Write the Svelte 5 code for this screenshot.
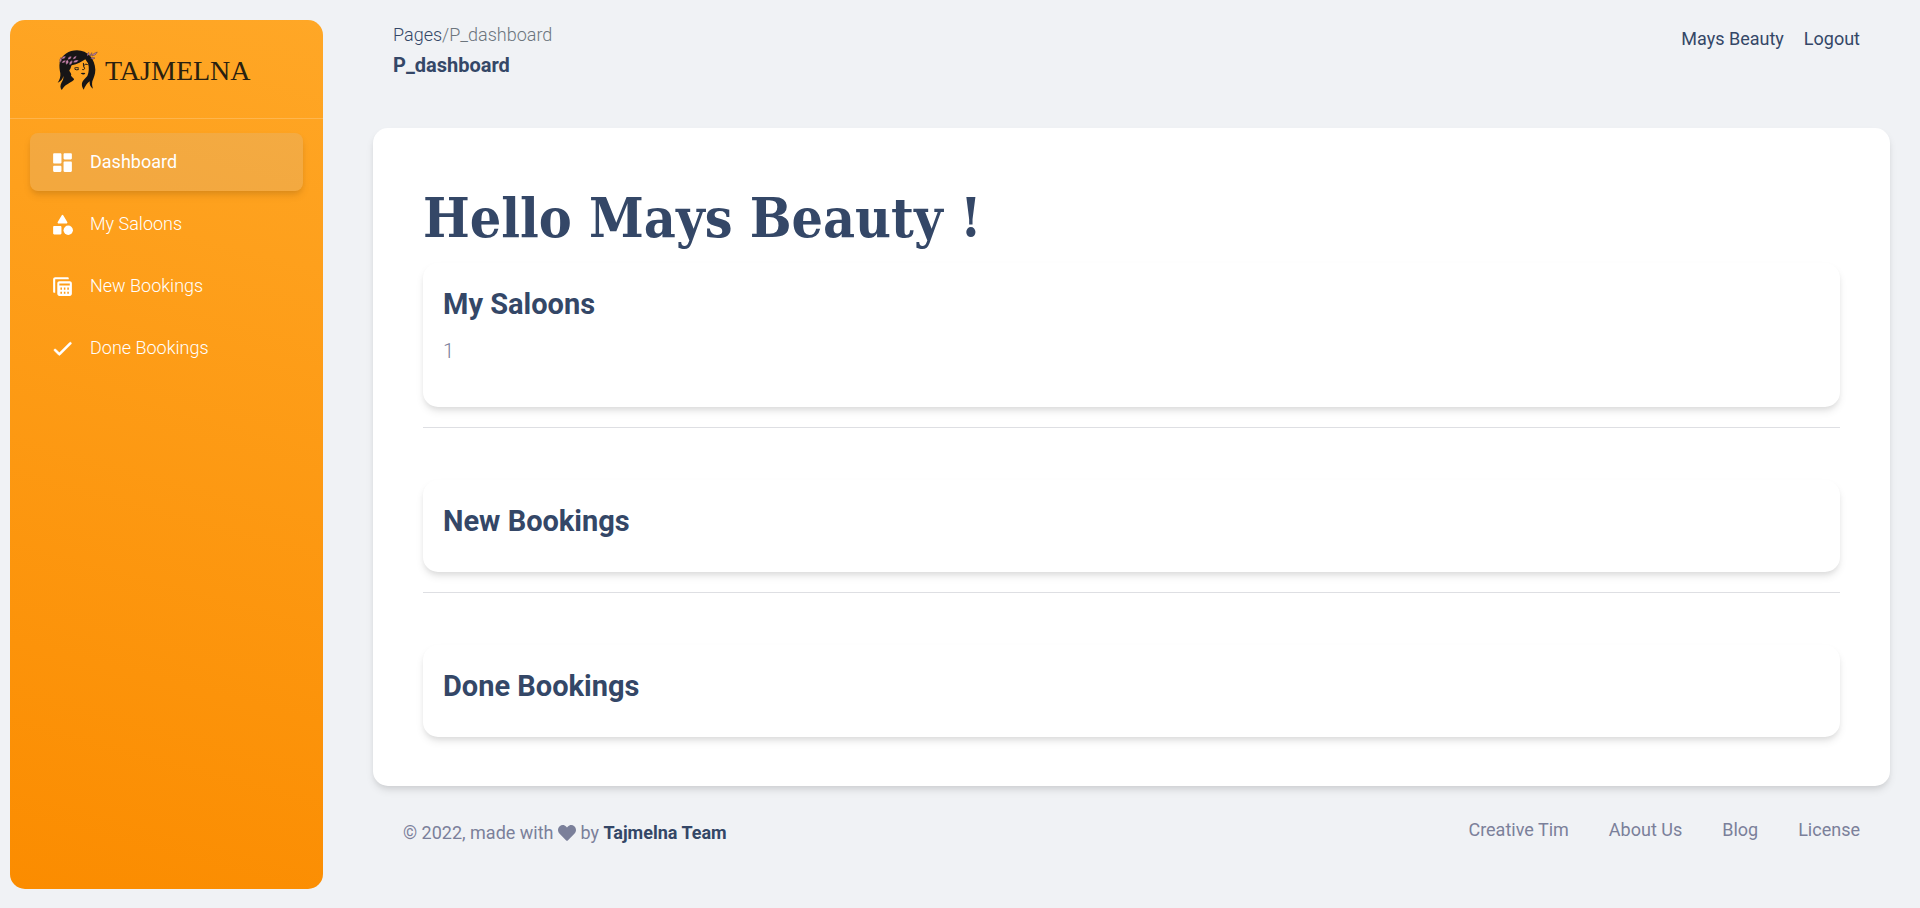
<script>
  const nav = [
    { label: 'Dashboard', icon: 'dashboard', active: true },
    { label: 'My Saloons', icon: 'category' },
    { label: 'New Bookings', icon: 'table' },
    { label: 'Done Bookings', icon: 'check' }
  ];
  const sections = [
    { title: 'My Saloons', count: '1' },
    { title: 'New Bookings' },
    { title: 'Done Bookings' }
  ];
  const footerLinks = ['Creative Tim', 'About Us', 'Blog', 'License'];
</script>

<div class="layout">
  <aside class="sidebar">
    <a class="brand" href="#home">
      <svg class="emblem" viewBox="20 27 126 126" aria-hidden="true">
        <path fill="#171516" d="M28 68C34 44 56 31 80 31C113 31 134 58 135 89C135 104 130 113 126 124C124 133 126 140 128 146C120 141 117 134 118 124C113 129 109 131 107 136C104 140 102 144 100 149C95 142 93 134 96 126C99 120 106 114 111 108C116 98 117 82 113 70L105 58C94 64 82 73 64 76C61 80 62 87 57 91C58 98 65 100 62 107C66 112 72 115 71 119C65 125 54 130 46 136C40 141 37 147 34 150C29 144 29 136 34 127C38 121 40 115 39 108C37 117 32 125 22 128C28 120 31 110 30 100C28 90 26 78 28 68Z" />
        <path fill="none" stroke="#171516" stroke-width="3" stroke-linecap="round" d="M73 84q6-3 12 0M74 88q5 3 10 1M99 70q-1 8 4 16-2 4-6 3M102 75q4-5 9-2" />
        <path fill="#171516" d="M91 100q4-3 7-1 4-2 7 1-5 7-14 0z" />
        <g fill="#c883ad" stroke="#171516" stroke-width="1">
          <path d="M29 68q-3-9 3-16 6 8-3 16zM34 57q1-9 12-9-1 10-12 9zM34 69q3-10 12-8-1 10-12 8zM48 74q-5-9 3-15 9 7-3 15zM52 59q2-10 11-10 1 10-11 10zM57 75q-2-9 8-14 5 10-8 14zM68 67q5-10 17-6-6 10-17 6zM67 58q2-9 11-11 1 9-11 11z" />
          <path d="M110 49q-1-8 5-12 5 7-5 12zM118 49q1-8 7-11 1 8-7 11zM124 48q3-8 17-12-4 11-17 12zM120 55q5-5 14-1-5 6-14 1z" />
        </g>
      </svg>
      <span>TAJMELNA</span>
    </a>
    <nav aria-label="Main">
      {#each nav as item}
        <a class="nav-item" class:active={item.active} href="#nav">
          <svg viewBox="0 0 24 24" fill="currentColor" aria-hidden="true">
            {#if item.icon === 'dashboard'}
              <path d="M4 13h6c.55 0 1-.45 1-1V4c0-.55-.45-1-1-1H4c-.55 0-1 .45-1 1v8c0 .55.45 1 1 1zm0 8h6c.55 0 1-.45 1-1v-4c0-.55-.45-1-1-1H4c-.55 0-1 .45-1 1v4c0 .55.45 1 1 1zm10 0h6c.55 0 1-.45 1-1v-8c0-.55-.45-1-1-1h-6c-.55 0-1 .45-1 1v8c0 .55.45 1 1 1zM13 4v4c0 .55.45 1 1 1h6c.55 0 1-.45 1-1V4c0-.55-.45-1-1-1h-6c-.55 0-1 .45-1 1z" />
            {:else if item.icon === 'category'}
              <path d="M11.15 3.4 7.43 9.48A1 1 0 0 0 8.28 11h7.43a1 1 0 0 0 .85-1.52L12.85 3.4a1 1 0 0 0-1.7 0z" />
              <circle cx="17.5" cy="17.5" r="4.5" />
              <path d="M4 21.500h6c.55 0 1-.45 1-1v-6c0-.55-.45-1-1-1H4c-.55 0-1 .45-1 1v6c0 .55.45 1 1 1z" />
            {:else if item.icon === 'table'}
              <path d="M17 3c.55 0 1 .45 1 1v1H5v13H4c-.55 0-1-.45-1-1V5c0-1.100.9-2 2-2z" />
              <path fill-rule="evenodd" d="M9 7h10c1.100 0 2 .9 2 2v10c0 1.100-.9 2-2 2H9c-1.100 0-2-.9-2-2V9c0-1.100.9-2 2-2zM9 9v2h10V9zM10 13v2h1.500v-2zM13.300 13v2h1.500v-2zM16.600 13v2h1.500v-2zM10 17v2h1.500v-2zM13.300 17v2h1.500v-2zM16.600 17v2h1.500v-2z" />
            {:else}
              <path stroke="currentColor" stroke-width="0.6" d="M9 16.170 5.530 12.700a1 1 0 0 0-1.410 1.410l4.180 4.180c.39.39 1.020.39 1.410 0L20.290 7.710a1 1 0 0 0-1.410-1.410z" />
            {/if}
          </svg>
          {item.label}
        </a>
      {/each}
    </nav>
  </aside>

  <main>
    <header>
      <div>
        <div class="crumbs"><a href="#pages">Pages</a><span>/P_dashboard</span></div>
        <h6>P_dashboard</h6>
      </div>
      <div class="account">
        <a href="#profile">Mays Beauty</a>
        <a href="#logout">Logout</a>
      </div>
    </header>

    <div class="card panel">
      <h1>Hello Mays Beauty !</h1>
      {#each sections as section, i}
        {#if i > 0}<hr />{/if}
        <section class="card">
          <h3>{section.title}</h3>
          {#if section.count}<p>{section.count}</p>{/if}
        </section>
      {/each}
    </div>

    <footer>
      <div class="credit">
        © 2022, made with
        <svg viewBox="0 0 512 512" aria-label="love" role="img"><path fill="currentColor" d="M462.300 62.600C407.500 15.900 326 24.300 275.700 76.200L256 96.500l-19.700-20.300C186.100 24.300 104.500 15.900 49.700 62.600c-62.800 53.600-66.100 149.800-9.900 207.900l193.500 199.800c12.500 12.900 32.800 12.900 45.300 0l193.500-199.800c56.300-58.100 53-154.300-9.800-207.900z" /></svg>
        by <a href="#team">Tajmelna Team</a>
      </div>
      <nav class="links" aria-label="Footer">
        {#each footerLinks as link}<a href="#footer">{link}</a>{/each}
      </nav>
    </footer>
  </main>
</div>

<style>
  :global(body) {
    margin: 0;
    background: #f0f2f5;
    font-family: Roboto, "Liberation Sans", sans-serif;
    font-size: 18px;
    line-height: 28px;
    color: #344767;
  }
  a { color: inherit; text-decoration: none; }
  h1, h3, h6, p { margin: 0; }
  .layout { display: flex; align-items: flex-start; }
  .sidebar {
    position: sticky;
    top: 20px;
    flex: 0 0 313px;
    height: calc(100vh - 39px);
    margin: 20px 0 19px 10px;
    border-radius: 15px;
    background: linear-gradient(195deg, #ffa726, #fb8c00);
    overflow: hidden;
  }
  .brand {
    display: flex;
    align-items: center;
    gap: 6px;
    padding: 28px 47px 26px;
    border-bottom: 1px solid rgba(255, 255, 255, 0.2);
    font: 28px/42px "Liberation Serif", serif;
    color: #29200f;
  }
  .brand span { padding-top: 2px; }
  .emblem { width: 42px; height: 42px; }
  .sidebar nav {
    display: flex;
    flex-direction: column;
    gap: 4px;
    padding: 14px 20px;
  }
  .nav-item {
    display: flex;
    align-items: center;
    gap: 15px;
    padding: 15px 20px;
    border-radius: 8px;
    color: #fff;
    font-weight: 300;
  }
  .nav-item svg { width: 25px; height: 25px; }
  .nav-item.active {
    font-weight: 400;
    background: rgba(199, 199, 199, 0.2);
    box-shadow: 0 5px 8px -1px rgba(0, 0, 0, 0.1), 0 3px 5px -1px rgba(0, 0, 0, 0.06);
  }
  main { flex: 1; min-width: 0; padding: 20px 30px 20px 50px; }
  header {
    display: flex;
    justify-content: space-between;
    padding: 1px 30px 27px 20px;
  }
  .crumbs { font-weight: 300; }
  .crumbs span { color: #6c757d; }
  h6 { font-size: 20px; line-height: 32px; font-weight: 700; }
  .account { display: flex; gap: 20px; padding-top: 4px; }
  .card {
    border-radius: 15px;
    background: #fff;
    box-shadow: 0 5px 8px -1px rgba(0, 0, 0, 0.1), 0 3px 5px -1px rgba(0, 0, 0, 0.06);
  }
  .panel { margin-top: 20px; padding: 50px 50px 49px; }
  h1 {
    padding-top: 4px;
    margin-bottom: 10px;
    font: 700 55px/71px "Roboto Slab", "DejaVu Serif Condensed", "DejaVu Serif", serif;
  }
  section { padding: 20px; }
  h3 { margin-bottom: 10px; font-size: 29px; line-height: 42px; font-weight: 700; }
  p { margin-bottom: 20px; font-size: 20px; line-height: 32px; font-weight: 300; color: #7b809a; }
  hr { margin: 20px 0 52px; border: 0; border-top: 1px solid #dedfe3; }
  footer {
    display: flex;
    justify-content: space-between;
    padding: 30px;
    color: #7b809a;
  }
  .credit { padding-top: 3px; }
  .credit svg { width: 18px; height: 18px; vertical-align: -3px; }
  .credit a { color: #344767; font-weight: 700; }
  .links { display: flex; gap: 40px; }
</style>
